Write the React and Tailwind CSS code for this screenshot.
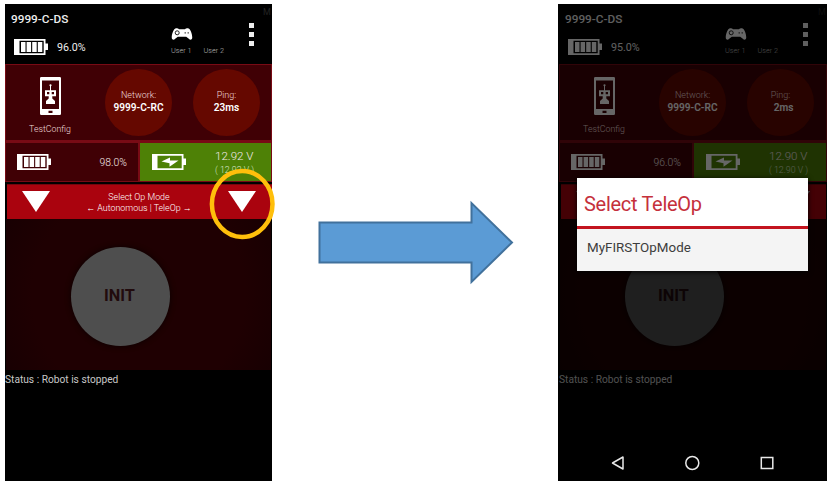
import React from "react";

function Battery({ charging = false, className = "" }) {
  return (
    <svg className={className} width="34" height="16" viewBox="0 0 34 16">
      <path fillRule="evenodd" fill="#fff" d="M0 0H31.5V4.5H34V11H31.5V16H0ZM5.5 1.8V14.2H29.7V1.8Z" />
      {charging ? (
        <path fill="#fff" d="M9.5 7.4L18 3.4V6.4H26.5L17.5 12.8V9.2Z" />
      ) : (
        <g fill="#fff">
          <rect x="7" y="3" width="4.5" height="10" />
          <rect x="12.6" y="3" width="4.5" height="10" />
          <rect x="18.2" y="3" width="4.5" height="10" />
          <rect x="23.8" y="3" width="4.5" height="10" />
        </g>
      )}
    </svg>
  );
}

function Gamepad() {
  return (
    <svg width="22" height="12" viewBox="0 0 22 12">
      <path fill="#fff" d="M4 .7C5.5 0 7.3.2 8 1.3H14C14.7.2 16.5 0 18 .7C20 2 21.5 7.5 21.2 10C21 12 19 12.2 17.8 10.8L15.2 8.8H6.8L4.2 10.8C3 12.2 1 12 .8 10C.5 7.5 2 2 4 .7Z" />
      <circle cx="6.2" cy="4.8" r="2" fill="none" stroke="#222" strokeWidth="1" />
      <path d="M13.5 4.8H15M16.5 4.8H18" stroke="#555" strokeWidth="1.3" />
    </svg>
  );
}

function RobotPhone() {
  return (
    <svg width="21" height="38" viewBox="0 0 21 38">
      <path fillRule="evenodd" fill="#fff" d="M1.2 0H19.8Q21 0 21 1.2V36.8Q21 38 19.8 38H1.2Q0 38 0 36.8V1.2Q0 0 1.2 0ZM2 3.5V32H19V3.5ZM8.5 33.7V36H12.5V33.7Z" />
      <path fillRule="evenodd" fill="#fff" d="M10 8.5H11V13.2H16V19.3H12.3V21.5L15 24V27H6V24L8.7 21.5V19.3H5V13.2H10ZM7 15V17.3H9.3V15ZM11.7 15V17.3H14V15Z" />
      <circle cx="10.5" cy="8.3" r="1.1" fill="#fff" />
    </svg>
  );
}

function Triangle() {
  return (
    <svg width="28" height="21" viewBox="0 0 28 21">
      <path fill="#fff" d="M0 0H28L14 21Z" />
    </svg>
  );
}

function Disc({ label, value, className = "", valueClass = "" }) {
  return (
    <div className={`flex h-[67px] w-[67px] shrink-0 flex-col items-center rounded-full bg-[#650800] pt-[21px] whitespace-nowrap text-white ${className}`}>
      <span className="text-[9px] leading-[10px] font-light text-[#efdada]">{label}</span>
      <span className={`mt-[2px] text-[10.1px] leading-[12px] font-semibold ${valueClass}`}>{value}</span>
    </div>
  );
}

function DriverStation({ phone, robot, ping, pingClass, volts, minVolts, prompt = null, className = "" }) {
  return (
    <div className={`flex h-[477px] w-full flex-col bg-black ${className}`}>
      <div className="flex h-[60px] shrink-0">
        <div className="w-[165px] pt-[8px] pl-[6px]">
          <div className="text-[11.8px] leading-[14px] font-medium whitespace-nowrap text-[#eee]">9999-C-DS</div>
          <div className="mt-[13px] flex items-center pl-[3px]">
            <Battery />
            <span className="ml-[9px] pt-px text-[10.7px] leading-[14px] text-[#eee]">{phone}</span>
          </div>
        </div>
        <div className="w-[66px] pt-[24px] text-[7.3px] leading-[9px] font-light text-[#bbb]">
          <div className="pl-[1px]"><Gamepad /></div>
          <div className="mt-[6px] flex gap-[12px] pl-px whitespace-nowrap"><span>User 1</span><span>User 2</span></div>
        </div>
        <div className="flex flex-col gap-[4px] pt-[19px] pl-[13px]">
          <i className="block h-[5px] w-[5px] bg-[#eee]" />
          <i className="block h-[5px] w-[5px] bg-[#eee]" />
          <i className="block h-[5px] w-[5px] bg-[#eee]" />
        </div>
        <span className="ml-auto w-[9px] pt-[3px] text-[9px] leading-[10px] text-[#222]">M</span>
      </div>

      <div className="flex h-[77px] shrink-0 border border-[#780b15] bg-[#400005]">
        <div className="flex w-[88px] flex-col items-center pt-[12px]">
          <RobotPhone />
          <span className="mt-[9px] text-[8.8px] leading-[10px] font-light text-[#efdada]">TestConfig</span>
        </div>
        <Disc className="mt-[4px] ml-[11px]" label="Network:" value="9999-C-RC" />
        <Disc className="mt-[4px] ml-[21px]" label="Ping:" value={ping} valueClass={pingClass} />
      </div>

      <div className="flex h-[41px] shrink-0 gap-[2px] border border-t-2 border-[#780b15] bg-[#780b15] font-light text-[#f3e8e8]">
        <div className="flex w-[132px] shrink-0 items-center bg-[#400005] pr-[11px] pl-[11px]">
          <Battery />
          <span className="ml-auto pt-px text-[10.4px]">{robot}</span>
        </div>
        <div className="flex flex-1 bg-[#4e8106]">
          <Battery charging className="mt-[11px] ml-[12px] shrink-0" />
          <div className="ml-[29px] whitespace-nowrap">
            <div className="pt-[6px] text-[11.6px] leading-[15px]">{volts}</div>
            <div className="text-[8.8px] leading-[13px] text-[#d9e5c5]">{minVolts}</div>
          </div>
        </div>
      </div>

      <div className="mt-[2px] ml-[2px] flex h-[35px] w-[265px] shrink-0 justify-between border-t border-[#75060d] bg-[#aa030e] pt-[6px] pr-[16px] pl-[15px]">
        <Triangle />
        <div className="pt-px text-center text-[8.9px] leading-[10.5px] font-light whitespace-nowrap text-white">
          {prompt}
        </div>
        <Triangle />
      </div>

      <div className="mx-[1px] flex h-[151px] shrink-0 bg-[radial-gradient(circle_at_center,#1f0002_70%,#180002_100%)] pt-[28px] pl-[65px]">
        <div className="flex h-[99px] w-[99px] items-center justify-center rounded-full bg-[#4e4e4e] pr-[2px] text-[16.3px] font-bold text-[#210b0d] shadow-[0_0_5px_1px_#100002]">INIT</div>
      </div>
      <div className="pt-[4px] text-[10.2px] leading-[12px] whitespace-nowrap text-[#c8c8c8]">Status : Robot is stopped</div>
    </div>
  );
}

export default function App() {
  return (
    <main className="flex h-[487px] w-[832px] overflow-hidden bg-white pt-[4px] pl-[5px] font-['Roboto','Liberation_Sans',sans-serif]">
      <section className="relative h-[477px] w-[267px] shrink-0">
        <DriverStation
          phone="96.0%"
          robot="98.0%"
          ping="23ms"
          volts="12.92 V"
          minVolts="( 12.92 V )"
          prompt={<>Select Op Mode<br />← Autonomous | TeleOp →</>}
        />
        <svg className="absolute top-[164px] left-[204px]" width="66" height="72" viewBox="0 0 66 72">
          <ellipse cx="33.2" cy="36" rx="30.3" ry="33" fill="none" stroke="#ffbf0b" strokeWidth="4.5" />
        </svg>
      </section>

      <div className="w-[286px] shrink-0 pt-[196px] pl-[46px]">
        <svg width="196" height="86" viewBox="0 0 196 86">
          <path d="M1.5 22.5H153.5V3L194 42.5L153.5 82V62.5H1.5Z" fill="#5b9bd5" stroke="#41719c" strokeWidth="2" />
        </svg>
      </div>

      <section className="relative h-[477px] w-[269px] shrink-0">
        <DriverStation className="pl-px" phone="95.0%" robot="96.0%" ping="2ms" pingClass="pl-[6px]" volts="12.90 V" minVolts="( 12.90 V )" />
        <div className="absolute inset-0 flex flex-col bg-black/60">
          <div className="mt-[174px] ml-[19px] flex h-[93px] w-[231px] shrink-0 flex-col bg-[#f4f4f4] shadow-[0_1px_5px_#000]">
            <div className="flex h-[51px] shrink-0 items-center border-b-[3px] border-[#c3141f] bg-white pt-[3px] pl-[7px] text-[20px] leading-[24px] tracking-[-0.3px] whitespace-nowrap text-[#c5303b]">Select TeleOp</div>
            <div className="pt-[11px] pl-[10px] text-[13.4px] leading-[16px] text-[#3c3c3c]">MyFIRSTOpMode</div>
          </div>
          <div className="mt-[182px] flex h-[20px] items-center pl-[53px]">
            <svg width="164" height="16" viewBox="0 0 164 16" fill="none" stroke="#e8e8e8" strokeWidth="1.5">
              <path d="M12 2V14L1.5 8Z" strokeLinejoin="round" />
              <circle cx="81.3" cy="8" r="6.5" />
              <rect x="150.3" y="2.5" width="11.5" height="11" />
            </svg>
          </div>
        </div>
      </section>
    </main>
  );
}
